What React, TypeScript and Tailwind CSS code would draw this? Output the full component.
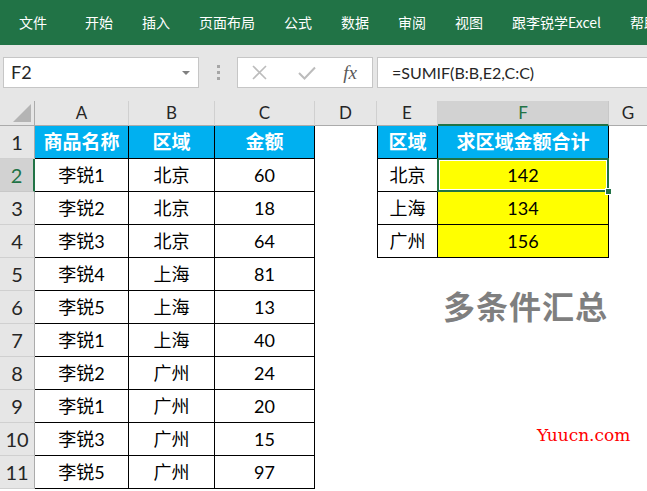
import React from 'react'

const tabs = ['开始', '插入', '页面布局', '公式', '数据', '审阅', '视图', '跟李锐学Excel', '帮助']

const data = [
  ['李锐1', '北京', '60'],
  ['李锐2', '北京', '18'],
  ['李锐3', '北京', '64'],
  ['李锐4', '上海', '81'],
  ['李锐5', '上海', '13'],
  ['李锐1', '上海', '40'],
  ['李锐2', '广州', '24'],
  ['李锐1', '广州', '20'],
  ['李锐3', '广州', '15'],
  ['李锐5', '广州', '97'],
]

const summary = [
  ['北京', '142'],
  ['上海', '134'],
  ['广州', '156'],
]

const cell = 'h-full shrink-0 flex items-center justify-center border-r border-b border-black'
const head = 'bg-[#00b0f0] text-white font-bold text-[19px]'
const body = 'bg-white text-[18px] text-black'

const ColHead = ({ label, w, active }: { label: string; w: string; active?: boolean }) => (
  <div
    className={
      active
        ? `${w} h-full shrink-0 flex items-center justify-center bg-[#d2d2d2] text-[#217346] border-r border-r-[#c8c8c8] border-b-2 border-b-[#217346]`
        : `${w} h-full shrink-0 flex items-center justify-center border-r border-r-[#d0d0d0] border-b border-b-[#ababab]`
    }
  >
    {label}
  </div>
)

const RowHead = ({ n }: { n: number }) => (
  <div
    className={
      n === 2
        ? 'w-[35px] h-full shrink-0 flex items-center justify-center text-[20px] bg-[#d2d2d2] text-[#217346] border-r-2 border-r-[#217346] border-b border-b-[#c8c8c8]'
        : 'w-[35px] h-full shrink-0 flex items-center justify-center text-[20px] bg-[#e6e6e6] text-[#262626] border-r border-r-[#ababab] border-b border-b-[#d0d0d0]'
    }
  >
    {n}
  </div>
)

export default function App() {
  const rows = [['商品名称', '区域', '金额'], ...data]

  return (
    <div className="relative w-[647px] h-[491px] overflow-hidden bg-white font-['Lato','Noto_Sans_CJK_SC',sans-serif]">
      {/* ribbon */}
      <div className="h-[45px] bg-[#217346] flex items-center pl-[19px] pb-[1px] text-white text-[14px] whitespace-nowrap font-['Noto_Sans_CJK_SC',sans-serif]">
        <span className="mr-[38px]">文件</span>
        <div className="flex gap-[29px]">
          {tabs.map((t) => (
            <span key={t}>{t}</span>
          ))}
        </div>
      </div>

      {/* formula bar */}
      <div className="h-[56px] bg-[#e6e6e6] flex items-start pt-[12px]">
        <div className="ml-[3px] w-[196px] h-[31px] bg-white border border-[#c6c6c6] flex items-center justify-between pl-[7px] pr-[8px] text-[18px] text-[#262626]">
          <span>F2</span>
          <span className="w-0 h-0 border-l-[4px] border-r-[4px] border-t-[4px] border-l-transparent border-r-transparent border-t-[#808080]" />
        </div>
        <div className="w-[38px] h-[31px] flex flex-col items-center justify-center gap-[3px]">
          <span className="w-[3px] h-[3px] bg-[#a6a6a6]" />
          <span className="w-[3px] h-[3px] bg-[#a6a6a6]" />
          <span className="w-[3px] h-[3px] bg-[#a6a6a6]" />
        </div>
        <div className="w-[136px] h-[31px] bg-white border border-[#c6c6c6] flex items-center">
          <div className="w-[42px] flex justify-center">
            <svg width="15" height="15" viewBox="0 0 15 15">
              <path d="M1 1 L14 14 M14 1 L1 14" stroke="#bcbcbc" strokeWidth="1.6" fill="none" />
            </svg>
          </div>
          <div className="w-[54px] flex justify-center">
            <svg width="18" height="14" viewBox="0 0 18 14">
              <path d="M1 7 L6.5 12.5 L17 1.5" stroke="#bcbcbc" strokeWidth="2" fill="none" />
            </svg>
          </div>
          <div className="w-[32px] flex justify-center text-[19px] italic text-[#595959] font-['Liberation_Serif',serif] leading-none">
            fx
          </div>
        </div>
        <div className="ml-[4px] flex-1 h-[31px] bg-white border border-r-0 border-[#c6c6c6] flex items-center pl-[14px] text-[16px] text-[#262626]">
          =SUMIF(B:B,E2,C:C)
        </div>
      </div>

      {/* column headers */}
      <div className="flex h-[25px] bg-[#e6e6e6] text-[17px] text-[#262626]">
        <div className="relative w-[35px] h-full shrink-0 border-r border-r-[#ababab] border-b border-b-[#ababab]">
          <svg className="absolute right-[3px] bottom-[3px]" width="18" height="18" viewBox="0 0 18 18">
            <path d="M18 0 L18 18 L0 18 Z" fill="#b4b4b4" />
          </svg>
        </div>
        <ColHead label="A" w="w-[94px]" />
        <ColHead label="B" w="w-[86px]" />
        <ColHead label="C" w="w-[100px]" />
        <ColHead label="D" w="w-[62px]" />
        <ColHead label="E" w="w-[61px]" />
        <ColHead label="F" w="w-[171px]" active />
        <div className="flex-1 h-full flex items-center justify-center border-b border-b-[#ababab]">G</div>
      </div>

      {/* sheet rows */}
      {rows.map((r, i) => {
        const n = i + 1
        const s = summary[i - 1]
        return (
          <div key={n} className="flex h-[33px]">
            <RowHead n={n} />
            <div className={`${cell} w-[94px] ${n === 1 ? head : body}`}>{r[0]}</div>
            <div className={`${cell} w-[86px] ${n === 1 ? head : body}`}>{r[1]}</div>
            <div className={`${cell} w-[100px] ${n === 1 ? head : body}`}>{r[2]}</div>
            <div className="w-[62px] h-full shrink-0" />
            {n === 1 && (
              <>
                <div className={`${cell} w-[61px] border-l ${head}`}>区域</div>
                <div className={`${cell} w-[171px] ${head}`}>求区域金额合计</div>
              </>
            )}
            {n >= 2 && n <= 4 && (
              <>
                <div className={`${cell} w-[61px] border-l ${body}`}>{s[0]}</div>
                {n === 2 ? (
                  <div className="relative w-[172px] shrink-0 -ml-[1px] -mt-[1px] h-[34px] flex items-center justify-center bg-[#ffff00] text-[18px] border-2 border-[#217346] shadow-[inset_0_0_0_1px_white]">
                    {s[1]}
                    <span className="absolute -right-[5px] -bottom-[5px] w-[7px] h-[7px] bg-[#217346] border border-white" />
                  </div>
                ) : (
                  <div className={`${cell} w-[171px] bg-[#ffff00] text-[18px]`}>{s[1]}</div>
                )}
              </>
            )}
          </div>
        )
      })}

      {/* floating text boxes on the sheet */}
      <div className="absolute left-[443px] top-[289px] text-[32px] font-bold text-[#7f7f7f] leading-none tracking-[1px] font-['Noto_Sans_CJK_SC',sans-serif]">
        多条件汇总
      </div>
      <div className="absolute left-[537px] top-[427px] text-[17px] text-[#ff0000] font-['DejaVu_Serif',serif] leading-none">
        Yuucn.com
      </div>
    </div>
  )
}
